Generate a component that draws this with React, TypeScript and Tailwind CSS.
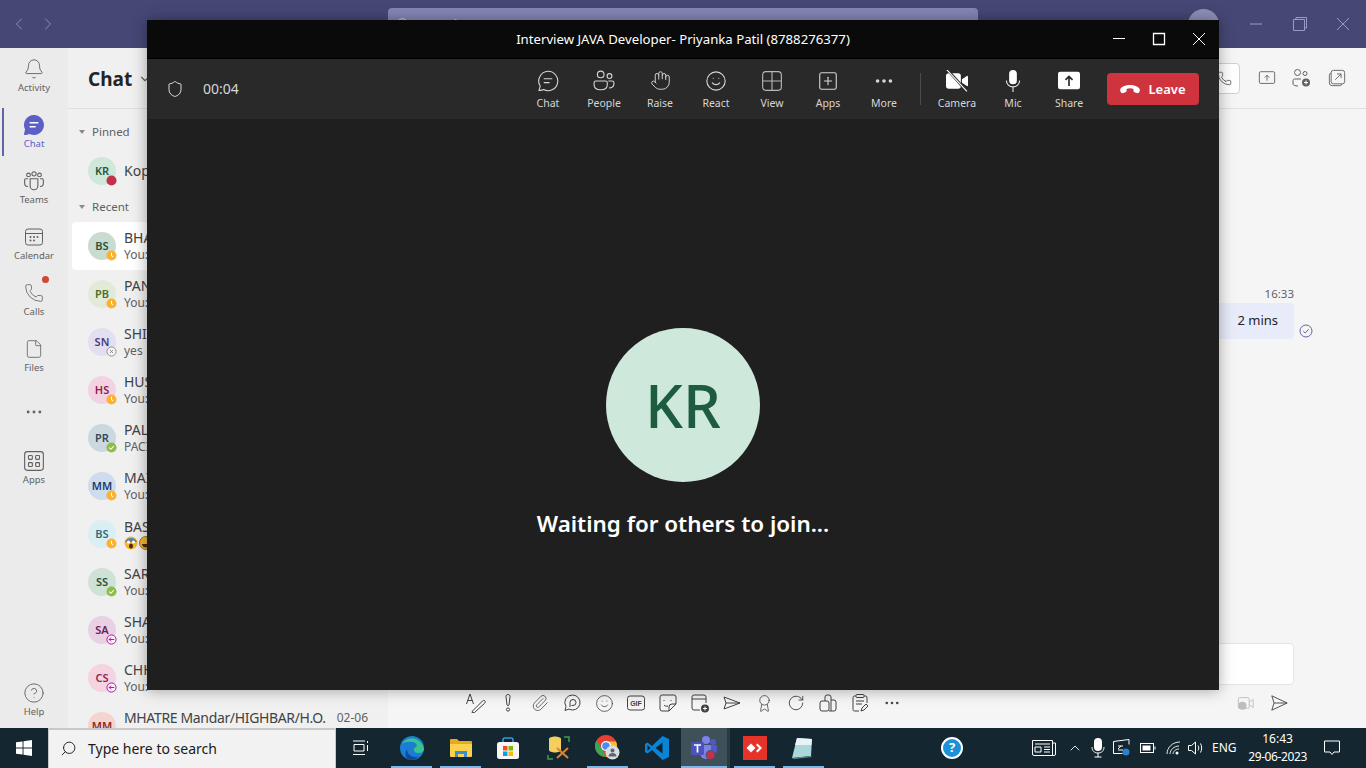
import type { ReactNode } from "react";
import {
  Bell,
  Phone,
  File,
  Ellipsis,
  CircleHelp,
  Search,
  Smile,
  Hand,
  SquarePlus,
  Paperclip,
  Award,
  RotateCw,
  ChevronLeft,
  ChevronRight,
  ChevronDown,
  Shield,
  ChevronUp,
} from "lucide-react";

const font = "font-['Noto_Sans','Open_Sans',sans-serif]";

function Svg({ size = 20, children, className = "" }: { size?: number; children: ReactNode; className?: string }) {
  return (
    <svg width={size} height={size} viewBox="0 0 20 20" fill="none" stroke="currentColor" strokeWidth={1} className={className}>
      {children}
    </svg>
  );
}

/* ---- rail icons ---- */
const ChatFilled = () => (
  <svg width="22" height="22" viewBox="0 0 20 20" className="text-[#5b5fc7]">
    <path d="M10 1a9 9 0 1 1-3.900 17.100c-1.400.4-3.300.9-4.600 1-.4 0-.7-.3-.6-.6.3-1.400.7-2.900 1-4.300A9 9 0 0 1 10 1Z" fill="currentColor" />
    <path d="M6.500 8h7M6.500 11.500h4.500" stroke="#fff" strokeWidth="1.400" strokeLinecap="round" />
  </svg>
);
const TeamsIcon = () => (
  <Svg size={22}>
    <circle cx="5" cy="4.500" r="1.700" />
    <circle cx="10" cy="3.500" r="1.900" />
    <circle cx="15" cy="4.500" r="1.700" />
    <path d="M6.500 8h7v6.500a3.500 3.500 0 0 1-7 0V8Z" />
    <path d="M4.500 8H2.500C1.800 8 1.500 8.400 1.500 9v3c0 1.700 1.200 3 3 3M15.500 8h2c.7 0 1 .4 1 1v3c0 1.700-1.200 3-3 3" />
  </Svg>
);
const CalendarIcon = () => (
  <Svg size={20}>
    <rect x="1.500" y="2" width="17" height="16" rx="2.500" />
    <path d="M1.500 6.500h17" />
    <g fill="currentColor" stroke="none">
      <circle cx="6.500" cy="10" r="1" />
      <circle cx="10" cy="10" r="1" />
      <circle cx="13.500" cy="10" r="1" />
      <circle cx="6.500" cy="13.500" r="1" />
      <circle cx="10" cy="13.500" r="1" />
    </g>
  </Svg>
);
const AppsIcon = () => (
  <Svg size={22}>
    <rect x="1.500" y="1.500" width="17" height="17" rx="2.500" />
    <rect x="5" y="5" width="3.500" height="3.500" rx=".7" />
    <rect x="11.500" y="5" width="3.500" height="3.500" rx=".7" />
    <rect x="5" y="11.500" width="3.500" height="3.500" rx=".7" />
    <rect x="11.500" y="11.500" width="3.500" height="3.500" rx=".7" />
  </Svg>
);

/* ---- meeting toolbar icons ---- */
const ChatOutline = () => (
  <svg width="22" height="22" viewBox="0 0 20 20" fill="none" stroke="currentColor" strokeWidth="1">
    <path d="M10 1.200a8.800 8.800 0 1 1-4 16.600c-1.300.4-2.900.9-4.200.9.300-1.400.8-2.800 1.100-4.100A8.800 8.800 0 0 1 10 1.200Z" />
    <path d="M6.500 8h7M6.500 11.500h4.500" strokeLinecap="round" />
  </svg>
);
const PeopleIcon = () => (
  <svg width="22" height="22" viewBox="0 0 20 20" fill="none" stroke="currentColor" strokeWidth="1">
    <circle cx="7" cy="4" r="3" />
    <circle cx="15" cy="5.500" r="2.200" />
    <path d="M1 11.500c0-.8.600-1.500 1.500-1.500h9c.8 0 1.500.7 1.500 1.500v2c0 3-2.500 4.500-6 4.500s-6-1.500-6-4.500v-2Z" />
    <path d="M14 10h3.500c.8 0 1.500.7 1.500 1.500v1c0 2.500-2 3.800-4.500 3.800" />
  </svg>
);
const ViewIcon = () => (
  <svg width="22" height="22" viewBox="0 0 20 20" fill="none" stroke="#b8b8b8" strokeWidth="1">
    <rect x="1.500" y="1.500" width="17" height="17" rx="3" />
    <path d="M10 1.500v17M1.500 10h17" />
  </svg>
);
const CameraOff = () => (
  <svg width="22" height="22" viewBox="0 0 20 20">
    <rect x="0" y="3" width="13.500" height="14" rx="2.500" fill="#fff" />
    <path d="M14.500 8.300 19 5.400c.4-.2 1 0 1 .6v8c0 .6-.6.800-1 .6l-4.500-2.900V8.300Z" fill="#fff" />
    <path d="M1 -.5 19 19.500" stroke="#292929" strokeWidth="2.400" />
    <path d="M.5 -.5 19 19.500" stroke="#fff" strokeWidth="1" />
  </svg>
);
const MicFilled = () => (
  <svg width="22" height="22" viewBox="0 0 20 20">
    <rect x="6.500" y="0" width="7" height="13" rx="3.500" fill="#fff" />
    <path d="M4 9.500c0 3.500 2.700 5.800 6 5.800s6-2.300 6-5.800M10 15.500V20" stroke="#e8e8e8" strokeWidth="1" fill="none" />
  </svg>
);
const ShareFilled = () => (
  <svg width="22" height="22" viewBox="0 0 20 20">
    <rect x="0" y="1.500" width="20" height="16" rx="2" fill="#fff" />
    <path d="M10 14.500V6M6.800 9 10 5.800 13.200 9" stroke="#292929" strokeWidth="1.500" fill="none" />
  </svg>
);
const HangUp = () => (
  <svg width="20" height="10" viewBox="0 0 20 10">
    <path d="M10 0C5.500 0 1.800 1.700.5 3.700-.2 4.800.2 6.500 1 7.500c.5.700 1.500.8 2.300.5l2.200-.8c.8-.3 1.200-1.100 1.100-2l-.1-1.300c1-.4 2.300-.6 3.500-.6s2.500.2 3.500.6l-.1 1.300c-.1.900.3 1.700 1.100 2l2.200.8c.8.3 1.800.2 2.300-.5.800-1 1.200-2.700.5-3.800C18.200 1.700 14.500 0 10 0Z" fill="#fff" />
  </svg>
);

function ToolBtn({ label, children, strong }: { label: string; children: ReactNode; strong?: boolean }) {
  return (
    <div className={`flex w-[56px] flex-col items-center ${strong ? "text-white" : "text-[#d6d6d6]"}`}>
      <div className="flex h-[24px] items-center justify-center">{children}</div>
      <span className="mt-[3px] text-[10.500px] leading-[14px] text-[#d6d6d6]">{label}</span>
    </div>
  );
}

/* ---- rail ---- */
function RailItem({ label, children, active, dot }: { label?: string; children: ReactNode; active?: boolean; dot?: boolean }) {
  return (
    <div className={`relative flex h-[56px] w-[68px] flex-col items-center ${label ? "pt-[10px]" : "justify-center"} ${active ? "text-[#5b5fc7]" : "text-[#616161]"}`}>
      {active && <div className="absolute left-[2px] top-[4px] h-[48px] w-[2px] bg-[#6264a7]" />}
      {dot && <div className="absolute right-[19px] top-[4px] h-[7px] w-[7px] rounded-full bg-[#cc4a31]" />}
      <div className="flex h-[22px] items-center justify-center">{children}</div>
      {label && <span className="mt-[1px] text-[9.500px] leading-[14px]">{label}</span>}
    </div>
  );
}

/* ---- status badge ---- */
type Status = "busy" | "away" | "off" | "ok" | "oof";

function Badge({ status }: { status: Status }) {
  return (
    <div className="absolute left-[17px] top-[17px] flex h-[12px] w-[12px] items-center justify-center rounded-full">
      <svg width="11" height="11" viewBox="0 0 12 12">
        {status === "busy" && <circle cx="6" cy="6" r="5.500" fill="#c4314b" />}
        {status === "away" && (
          <>
            <circle cx="6" cy="6" r="5.500" fill="#fdb22c" />
            <path d="M6 3v3.200l2 1.300" stroke="#fff" strokeWidth="1.100" fill="none" />
          </>
        )}
        {status === "ok" && (
          <>
            <circle cx="6" cy="6" r="5.500" fill="#8cbd4a" />
            <path d="M3.500 6.200 5.300 8l3.200-3.500" stroke="#fff" strokeWidth="1.100" fill="none" />
          </>
        )}
        {status === "off" && (
          <>
            <circle cx="6" cy="6" r="5" fill="#f5f5f5" stroke="#8a8a8a" />
            <path d="M4.200 4.200l3.600 3.600M7.800 4.200 4.200 7.800" stroke="#8a8a8a" />
          </>
        )}
        {status === "oof" && (
          <>
            <circle cx="6" cy="6" r="5" fill="#f5f5f5" stroke="#b4009e" />
            <path d="M9 6H3.500M5.500 4 3.500 6l2 2" stroke="#b4009e" fill="none" />
          </>
        )}
      </svg>
    </div>
  );
}

const Emoji = () => (
  <div className="flex gap-[1px]">
    <svg width="14" height="14" viewBox="0 0 14 14">
      <circle cx="7" cy="7" r="6.500" fill="#f2b632" />
      <path d="M1 6a6.500 6.500 0 0 1 12 0Z" fill="#5b7fb0" />
      <circle cx="4.500" cy="6" r="1.500" fill="#fff" />
      <circle cx="9.500" cy="6" r="1.500" fill="#fff" />
      <ellipse cx="7" cy="10" rx="2" ry="2.500" fill="#4a2a10" />
    </svg>
    <svg width="14" height="14" viewBox="0 0 14 14">
      <circle cx="7" cy="7" r="6.500" fill="#f2b632" />
      <circle cx="7" cy="7" r="6.500" fill="none" stroke="#6b4a10" strokeWidth=".7" />
      <path d="M3 8h8c0 2.500-2 3.500-4 3.500S3 10.500 3 8Z" fill="#4a2a10" />
    </svg>
  </div>
);

const rows: { initials: string; bg: string; fg: string; status: Status; name: string; sub: ReactNode; active?: boolean }[] = [
  { initials: "BS", bg: "bg-[#c9dcd0]", fg: "text-[#28503a]", status: "away", name: "BHA", sub: "You:", active: true },
  { initials: "PB", bg: "bg-[#e2ebd8]", fg: "text-[#4f6b2a]", status: "away", name: "PAN", sub: "You:" },
  { initials: "SN", bg: "bg-[#e3dff0]", fg: "text-[#4b3d7a]", status: "off", name: "SHI", sub: "yes" },
  { initials: "HS", bg: "bg-[#f3d3e1]", fg: "text-[#8e1f4f]", status: "away", name: "HUS", sub: "You:" },
  { initials: "PR", bg: "bg-[#ccd8e0]", fg: "text-[#2f4a5a]", status: "ok", name: "PAL", sub: "PACI" },
  { initials: "MM", bg: "bg-[#cddcee]", fg: "text-[#1f3a6b]", status: "away", name: "MAI", sub: "You:" },
  { initials: "BS", bg: "bg-[#d9eff3]", fg: "text-[#2c6f7f]", status: "away", name: "BAS", sub: <Emoji /> },
  { initials: "SS", bg: "bg-[#cfe2d6]", fg: "text-[#28503a]", status: "ok", name: "SAR", sub: "You:" },
  { initials: "SA", bg: "bg-[#e9d0e4]", fg: "text-[#6b2458]", status: "oof", name: "SHA", sub: "You:" },
  { initials: "CS", bg: "bg-[#f6d3e0]", fg: "text-[#8b2a52]", status: "oof", name: "CHH", sub: "You:" },
];

function Avatar({ initials, bg, fg, status }: { initials: string; bg: string; fg: string; status?: Status }) {
  return (
    <div className={`relative flex h-[28px] w-[28px] shrink-0 items-center justify-center rounded-full text-[11px] font-semibold ${bg} ${fg}`}>
      {initials}
      {status && <Badge status={status} />}
    </div>
  );
}

function SectionHead({ label, className }: { label: string; className: string }) {
  return (
    <div className={`flex h-[20px] items-center pl-[11px] text-[11.500px] text-[#616161] ${className}`}>
      <div className="mr-[7px] h-0 w-0 border-x-[3.500px] border-t-[4px] border-x-transparent border-t-[#8a8a8a]" />
      {label}
    </div>
  );
}

/* ---- compose toolbar ---- */
const composeIcons: ReactNode[] = [
  <svg key="a" width="20" height="20" viewBox="0 0 20 20" fill="none" stroke="currentColor">
    <path d="M.5 11 4 1l3.500 10M1.800 7.500h4.400M6.500 18l10-10c.8-.8 2-.8 2.500 0s.3 1.600-.4 2.300L8.500 19.500l-2.500.2.500-1.700Z" />
  </svg>,
  <svg key="b" width="20" height="20" viewBox="0 0 20 20" fill="none" stroke="currentColor">
    <path d="M10 1.500c1.300 0 2.200.9 2 2.200L11 12c-.1.800-1.900.8-2 0L8 3.700C7.800 2.400 8.700 1.500 10 1.500Z" />
    <circle cx="10" cy="16.500" r="1.600" />
  </svg>,
  <Paperclip key="c" size={18} strokeWidth={1} />,
  <svg key="d" width="20" height="20" viewBox="0 0 20 20" fill="none" stroke="currentColor">
    <path d="M10.500 2a7.500 7.500 0 1 1-3.500 14.100L3 17.500l1-4A7.500 7.500 0 0 1 10.500 2Z" />
    <path d="M8 14V9.500a3 3 0 1 1 3 3H9.500" />
  </svg>,
  <Smile key="e" size={19} strokeWidth={1} />,
  <svg key="f" width="20" height="20" viewBox="0 0 20 20" fill="none" stroke="currentColor">
    <rect x="1.500" y="3" width="17" height="14" rx="2.500" />
    <text x="10" y="12.800" fontSize="7" fontWeight="700" fill="currentColor" stroke="none" textAnchor="middle" fontFamily="Liberation Sans, sans-serif">
      GIF
    </text>
  </svg>,
  <svg key="g" width="20" height="20" viewBox="0 0 20 20" fill="none" stroke="currentColor">
    <path d="M4 2h12a2 2 0 0 1 2 2v7l-7 7H4a2 2 0 0 1-2-2V4a2 2 0 0 1 2-2Z" />
    <path d="M11 18v-4a3 3 0 0 1 3-3h4M6 7v1M13 7v1M6 12c1 1.200 2.500 1.500 4 1" />
  </svg>,
  <svg key="h" width="20" height="20" viewBox="0 0 20 20" fill="none" stroke="currentColor">
    <path d="M10 17H4a2 2 0 0 1-2-2V4a2 2 0 0 1 2-2h10a2 2 0 0 1 2 2v6M2 6h14" />
    <circle cx="15" cy="15.500" r="4" fill="#424242" stroke="none" />
    <path d="M15 13.500v4M13 15.500h4" stroke="#fff" />
  </svg>,
  <svg key="i" width="20" height="20" viewBox="0 0 20 20" fill="none" stroke="currentColor">
    <path d="M2 4l16 6-16 6 2-6-2-6ZM4 10h14" />
  </svg>,
  <Award key="j" size={19} strokeWidth={1} />,
  <RotateCw key="k" size={18} strokeWidth={1.200} />,
  <svg key="l" width="20" height="20" viewBox="0 0 20 20" fill="none" stroke="currentColor">
    <rect x="2" y="8" width="9" height="10" rx="2" />
    <path d="M7 8V4a2 2 0 0 1 2-2h2a2 2 0 0 1 2 2v14M11 18h5a2 2 0 0 0 2-2V9a2 2 0 0 0-2-2h-3" />
  </svg>,
  <svg key="m" width="20" height="20" viewBox="0 0 20 20" fill="none" stroke="currentColor">
    <path d="M6 3H4.500A1.500 1.500 0 0 0 3 4.500v12A1.500 1.500 0 0 0 4.500 18H9M14 3h1.500A1.500 1.500 0 0 1 17 4.500V10" />
    <rect x="6" y="1.500" width="8" height="3" rx="1" />
    <path d="M6 8h8M6 11h6M11 18l1-3 4-4 2 2-4 4-3 1Z" />
  </svg>,
  <Ellipsis key="n" size={18} strokeWidth={1.500} />,
];

/* ---- taskbar icons ---- */
const WinLogo = () => (
  <svg width="16" height="16" viewBox="0 0 16 16" fill="#fff">
    <path d="M0 2.300 6.600 1.400v6.200H0V2.300ZM7.500 1.300 16 0v7.600H7.500V1.300ZM0 8.400h6.600v6.200L0 13.700V8.400ZM7.500 8.400H16V16l-8.500-1.200V8.400Z" />
  </svg>
);
const Edge = () => (
  <svg width="24" height="24" viewBox="0 0 24 24">
    <circle cx="12" cy="12" r="12" fill="#1a7fd4" />
    <path d="M2 8c3-5 9-7 14-5 4 2 7 5 8 10 0 3-3 4-6 4-2 0-4-1-4-3 0-3 3-3 3-5-1-3-6-4-10-3-2 0-4 1-5 2Z" fill="#39c48f" />
    <path d="M7 13c0 4 3 8 8 8 2 0 3-.5 4-1.500-2 3-5 4.500-8 4.500-2 0-4-1-5-3-1-3-.5-6 1-8Z" fill="#0c4a9c" />
  </svg>
);
const Explorer = () => (
  <svg width="22" height="20" viewBox="0 0 22 20">
    <path d="M0 2a1 1 0 0 1 1-1h6l2 2h12a1 1 0 0 1 1 1v3H0V2Z" fill="#e8a820" />
    <path d="M0 6h22v12a1 1 0 0 1-1 1H1a1 1 0 0 1-1-1V6Z" fill="#fbd24c" />
    <path d="M5 13h12v6H5Z" fill="#3a8fd0" />
    <path d="M8 16h6v3H8Z" fill="#fbd24c" />
  </svg>
);
const Store = () => (
  <svg width="24" height="24" viewBox="0 0 24 24" className="-ml-[3px]">
    <path d="M7 6V4a2 2 0 0 1 2-2h6a2 2 0 0 1 2 2v2" fill="none" stroke="#2a9fd8" strokeWidth="1.600" />
    <rect x="1" y="6" width="22" height="17" rx="2.500" fill="#f7f7f7" />
    <rect x="7" y="10" width="4.500" height="4.500" fill="#f25022" />
    <rect x="12.500" y="10" width="4.500" height="4.500" fill="#7fba00" />
    <rect x="7" y="15.500" width="4.500" height="4.500" fill="#00a4ef" />
    <rect x="12.500" y="15.500" width="4.500" height="4.500" fill="#ffb900" />
  </svg>
);
const ToolIcon = () => (
  <svg width="24" height="24" viewBox="0 0 24 24" fill="none">
    <path d="M2 3c0-1.500 3-2.500 6-2.500s6 1 6 2.500v11c0 1.500-3 2.500-6 2.500s-6-1-6-2.500V3Z" fill="#f3cf5f" />
    <path d="M17 1h5v5M1 19v4h5" stroke="#3f9a4f" strokeWidth="1.500" />
    <path d="M10 12l11 10M21 12 10 22" stroke="#e0822f" strokeWidth="2" />
  </svg>
);
const Chrome = () => (
  <svg width="26" height="26" viewBox="0 0 26 26">
    <circle cx="11" cy="11" r="11" fill="#e34133" />
    <path d="M11 22A11 11 0 0 1 1.500 5.500L7 14l4 8Z" fill="#3aa757" />
    <path d="M11 22A11 11 0 0 0 21 6.500H11l4 7-4 8.500Z" fill="#fbc02d" />
    <circle cx="11" cy="11" r="5" fill="#fff" />
    <circle cx="11" cy="11" r="3.800" fill="#4a8bf5" />
    <circle cx="17.500" cy="17.500" r="7" fill="#d8dde2" />
    <circle cx="17.500" cy="15.500" r="2" fill="#5a6570" />
    <path d="M13.500 21.500c0-2.500 2-3.500 4-3.500s4 1 4 3.500Z" fill="#5a6570" />
  </svg>
);
const VsCode = () => (
  <svg width="24" height="24" viewBox="0 0 24 24">
    <path d="M17.500 0 24 3v18l-6.500 3L7 14l-4.500 3.500L0 16V8l2.500-1.500L7 10 17.500 0Z" fill="#0a84d6" />
    <path d="M17.500 6.500 10.500 12l7 5.500v-11ZM2.500 9v6L5.500 12l-3-3Z" fill="#0f2530" />
  </svg>
);
const TeamsApp = () => (
  <svg width="26" height="26" viewBox="0 0 26 26">
    <circle cx="15" cy="5" r="4" fill="#7b83eb" />
    <circle cx="22" cy="7" r="3" fill="#5059c9" />
    <path d="M9 10h12v8a6 6 0 0 1-12 0v-8Z" fill="#7b83eb" />
    <path d="M20 10h6v6a4 4 0 0 1-6 2.500V10Z" fill="#5059c9" />
    <rect x="0" y="7" width="13" height="13" rx="1.500" fill="#4b53bc" />
    <path d="M3 10h7M6.500 10v7.500" stroke="#fff" strokeWidth="1.700" />
    <circle cx="19.500" cy="20" r="4.500" fill="#c4314b" stroke="#3e5560" strokeWidth="1" />
  </svg>
);
const AnyDesk = () => (
  <svg width="24" height="24" viewBox="0 0 24 24">
    <rect width="24" height="24" fill="#e5332a" />
    <path d="M8 7.500 12.500 12 8 16.500 3.500 12 8 7.500Z" fill="#fff" />
    <path d="M14.500 7.500 19 12l-4.500 4.500-1.500-1.500 3-3-3-3 1.500-1.500Z" fill="#fff" />
  </svg>
);
const Notes = () => (
  <svg width="24" height="24" viewBox="0 0 24 24" className="-ml-[3px]">
    <path d="M7 2 22 3l-1 17L2 22 7 2Z" fill="#a8d8dc" />
    <path d="M7 2 22 3l-.5 6L5 9 7 2Z" fill="#e8f4f4" />
    <path d="M2 22 21 20l1 1-18 2-2-1Z" fill="#5e8e92" />
  </svg>
);

function TaskApp({ children, running, active }: { children: ReactNode; running?: boolean; active?: boolean }) {
  return (
    <div className={`relative flex h-[40px] w-[49px] items-center justify-center ${active ? "border-r-[3px] border-[#2a3b44] bg-[#3e5058]" : ""}`}>
      {children}
      {running && <div className={`absolute bottom-0 h-[2px] bg-[#76b9ed] ${active ? "inset-x-0" : "inset-x-[4px]"}`} />}
    </div>
  );
}

export default function App() {
  return (
    <div className={`relative flex h-[768px] w-[1366px] flex-col overflow-hidden bg-[#f5f5f5] ${font}`}>
      {/* Teams title bar */}
      <div className="relative flex h-[48px] shrink-0 items-center bg-[#464775] text-[#9a9bc4]">
        <div className="flex w-[388px] items-center pl-[9px]">
          <ChevronLeft size={20} strokeWidth={1} />
          <ChevronRight size={20} strokeWidth={1} className="ml-[9px]" />
        </div>
        <div className="mt-[8px] flex h-[32px] w-[590px] items-center self-start rounded-[4px] bg-[#8586b5] pl-[8px] text-[14px] text-[#d8d8ea]">
          <Search size={14} />
          <span className="ml-[8px]">Search</span>
        </div>
        <div className="ml-[210px] h-[31px] w-[31px] rounded-full bg-[#8f90b8]" />
        <svg width="14" height="14" viewBox="0 0 14 14" className="ml-[30px]" fill="none" stroke="currentColor">
          <path d="M1 7h12" />
        </svg>
        <svg width="16" height="16" viewBox="0 0 16 16" className="ml-[29px]" fill="none" stroke="currentColor">
          <path d="M1.500 3.500h11v11h-11zM4 3.500V1.500h10.500v10.500h-2" />
        </svg>
        <svg width="14" height="14" viewBox="0 0 14 14" className="ml-[28px]" fill="none" stroke="currentColor">
          <path d="M1 1l12 12M13 1 1 13" />
        </svg>
      </div>

      {/* Teams body */}
      <div className="flex min-h-0 flex-1">
        {/* App rail */}
        <div className="flex w-[68px] shrink-0 flex-col bg-[#ebebeb]">
          <RailItem label="Activity">
            <Bell size={22} strokeWidth={1} />
          </RailItem>
          <RailItem label="Chat" active>
            <ChatFilled />
          </RailItem>
          <RailItem label="Teams">
            <TeamsIcon />
          </RailItem>
          <RailItem label="Calendar">
            <CalendarIcon />
          </RailItem>
          <RailItem label="Calls" dot>
            <Phone size={20} strokeWidth={1} />
          </RailItem>
          <RailItem label="Files">
            <File size={20} strokeWidth={1} />
          </RailItem>
          <RailItem>
            <Ellipsis size={20} strokeWidth={1.500} />
          </RailItem>
          <RailItem label="Apps">
            <AppsIcon />
          </RailItem>
          <div className="mt-auto">
            <RailItem label="Help">
              <CircleHelp size={22} strokeWidth={1} />
            </RailItem>
          </div>
        </div>

        {/* Chat list */}
        <div className="w-[320px] shrink-0 overflow-hidden bg-[#f0f0f0]">
          <div className="flex h-[61px] items-center border-b border-[#e0e0e0] pl-[20px] pt-[2px]">
            <span className="text-[19px] font-bold leading-none text-[#242424]">Chat</span>
            <ChevronDown size={14} className="ml-[6px] text-[#616161]" />
          </div>
          <SectionHead label="Pinned" className="mt-[13px]" />
          <div className="mt-[5px] flex h-[48px] items-center pl-[20px]">
            <Avatar initials="KR" bg="bg-[#cfe8da]" fg="text-[#1f5c3f]" status="busy" />
            <span className="mb-[2px] ml-[8px] text-[14px] text-[#424242]">Kop</span>
          </div>
          <SectionHead label="Recent" className="mt-[2px]" />
          <div className="mt-[5px]">
            {rows.map((r, i) => (
              <div key={i} className={`ml-[4px] flex h-[48px] items-center rounded-[4px] pl-[16px] ${r.active ? "bg-white" : ""}`}>
                <Avatar initials={r.initials} bg={r.bg} fg={r.fg} status={r.status} />
                <div className="ml-[8px]">
                  <div className="text-[14px] leading-[17px] text-[#424242]">{r.name}</div>
                  <div className="mt-[1px] text-[12px] leading-[16px] text-[#616161]">{r.sub}</div>
                </div>
              </div>
            ))}
            <div className="ml-[4px] flex h-[48px] items-start pl-[16px] pt-[10px]">
              <Avatar initials="MM" bg="bg-[#f5d3d0]" fg="text-[#8a2a22]" />
              <div className="-mt-[3px] ml-[8px] flex w-[244px] items-center text-[#616161]">
                <span className="text-[14px] leading-[17px] tracking-[-0.35px] text-[#424242]">MHATRE Mandar/HIGHBAR/H.O.</span>
                <span className="ml-auto text-[12px] leading-[17px]">02-06</span>
              </div>
            </div>
          </div>
        </div>

        {/* Conversation */}
        <div className="flex min-w-0 flex-1 flex-col bg-[#f5f5f5]">
          <div className="flex h-[61px] shrink-0 items-center justify-end border-b border-[#e0e0e0] pr-[20px] text-[#616161]">
            <div className="flex h-[31px] w-[60px] items-center justify-end rounded-[4px] border border-[#d1d1d1] bg-white pr-[7px]">
              <Phone size={15} strokeWidth={1.200} className="text-[#424242]" />
            </div>
            <svg width="18" height="18" viewBox="0 0 20 20" className="ml-[18px]" fill="none" stroke="currentColor">
              <rect x="1.500" y="3" width="17" height="13" rx="1.500" />
              <path d="M10 13V7M7.500 9.500 10 7l2.500 2.500" />
            </svg>
            <svg width="20" height="20" viewBox="0 0 20 20" className="ml-[15px]" fill="none" stroke="currentColor">
              <circle cx="6.500" cy="4.500" r="3" />
              <circle cx="14" cy="5.500" r="2" />
              <path d="M2 16v-3.500c0-.8.600-1.500 1.500-1.500H10M2 16c0 1 2 2 5 2" />
              <circle cx="15" cy="14.500" r="4" fill="#616161" stroke="none" />
              <path d="M15 12.500v4M13 14.500h4" stroke="#fff" />
            </svg>
            <svg width="18" height="18" viewBox="0 0 20 20" className="ml-[17px]" fill="none" stroke="currentColor">
              <rect x="3.500" y="1.500" width="15" height="15" rx="2.500" />
              <path d="M3.500 4.500A2.500 2.500 0 0 0 1.500 7v8.500a3 3 0 0 0 3 3H13a2.500 2.500 0 0 0 2.500-2M8 12l6.500-6.500M10 5.500h4.500V10" />
            </svg>
          </div>

          <div className="flex flex-col items-end pr-[72px] pt-[177px]">
            <div className="text-[11.500px] leading-[16px] text-[#616161]">16:33</div>
            <div className="relative mt-[1px] flex h-[36px] w-[110px] items-center justify-end rounded-[4px] bg-[#e8ebfa] pr-[16px] text-[13px] text-[#242424]">
              2 mins
              <svg width="14" height="14" viewBox="0 0 14 14" className="absolute -right-[19px] top-[21px] text-[#6264a7]" fill="none" stroke="currentColor">
                <circle cx="7" cy="7" r="6" />
                <path d="M4.300 7.200 6.200 9l3.500-3.800" />
              </svg>
            </div>
          </div>

          <div className="mt-auto">
            <div className="ml-[20px] mr-[72px] h-[42px] rounded-[4px] border border-[#e5e5e5] bg-white" />
            <div className="mb-[9px] mt-[2px] flex h-[32px] items-center pl-[72px] pr-[78px] text-[#424242]">
              {composeIcons.map((icon, i) => (
                <div key={i} className="flex w-[32px] items-center justify-center">
                  {icon}
                </div>
              ))}
              <svg width="18" height="18" viewBox="0 0 20 20" className="ml-auto text-[#bdbdbd]" fill="none" stroke="currentColor">
                <rect x="1.500" y="4" width="12" height="12" rx="1.500" />
                <path d="M14 9l4-3v9l-4-3" />
                <circle cx="6" cy="13" r="4.500" fill="#bdbdbd" stroke="none" />
              </svg>
              <svg width="18" height="18" viewBox="0 0 20 20" className="ml-[15px] text-[#424242]" fill="none" stroke="currentColor">
                <path d="M2 2l17 8-17 8 2.500-8L2 2ZM4.500 10H19" />
              </svg>
            </div>
          </div>
        </div>
      </div>

      {/* Windows taskbar */}
      <div className={`flex h-[40px] shrink-0 items-center bg-[#14262f] text-white ${font}`}>
        <div className="flex w-[48px] items-center justify-center">
          <WinLogo />
        </div>
        <div className="flex h-[40px] w-[288px] items-center border-x border-t-2 border-[#c8c8c8] bg-[#f2f2f2] pb-[2px] pl-[11px] text-[#1a1a1a]">
          <Search size={17} strokeWidth={1.300} className="-scale-x-100" />
          <span className="ml-[11px] text-[14px]">Type here to search</span>
        </div>
        <div className="flex w-[49px] items-center justify-center">
          <svg width="16" height="16" viewBox="0 0 16 16" fill="none" stroke="#fff">
            <path d="M0 1h12M0 14.500h12M1 4.500h10v6.500H1zM14.500 1v2M14.500 5v6" />
          </svg>
        </div>
        <div className="flex pl-[2px]">
          <TaskApp running>
            <Edge />
          </TaskApp>
          <TaskApp running>
            <Explorer />
          </TaskApp>
          <TaskApp>
            <Store />
          </TaskApp>
          <TaskApp>
            <ToolIcon />
          </TaskApp>
          <TaskApp running>
            <Chrome />
          </TaskApp>
          <TaskApp>
            <VsCode />
          </TaskApp>
          <TaskApp running active>
            <TeamsApp />
          </TaskApp>
          <TaskApp running>
            <AnyDesk />
          </TaskApp>
          <TaskApp running>
            <Notes />
          </TaskApp>
        </div>

        {/* tray */}
        <div className="ml-[113px] flex h-[22px] w-[22px] items-center justify-center rounded-full border-2 border-white bg-[#1b92d8] text-[13px] font-bold text-white">
          ?
        </div>
        <svg width="24" height="16" viewBox="0 0 24 16" className="ml-[69px]" fill="none" stroke="#fff">
          <path d="M.5.500h20v15H2a1.500 1.500 0 0 1-1.500-1.500V.5ZM20.500 3h3v11a1.500 1.500 0 0 1-1.500 1.500h-1.500" />
          <path d="M3 4h15M3 7h6v5H3zM12 7h6M12 9.500h6M12 12h6" />
        </svg>
        <ChevronUp size={16} strokeWidth={1.300} className="ml-[11px]" />
        <svg width="14" height="20" viewBox="0 0 14 20" className="ml-[8px]" fill="none">
          <rect x="3" y="0" width="8" height="13" rx="4" fill="#fff" />
          <path d="M1 9c0 4 2.500 6 6 6s6-2 6-6M7 15v4M3.500 19h7" stroke="#fff" />
        </svg>
        <svg width="18" height="18" viewBox="0 0 18 18" className="ml-[8px]" fill="none" stroke="#fff">
          <path d="M.5 2.500 16 .5v5M.5 2.500v12h9" />
          <path d="M5 7h5M5 10l3-3M10 11H5" />
          <circle cx="13" cy="13" r="3.500" fill="#2f7fd1" stroke="none" />
        </svg>
        <svg width="16" height="10" viewBox="0 0 16 10" className="ml-[9px]" fill="none" stroke="#fff">
          <rect x=".5" y=".5" width="13" height="9" />
          <rect x="2.500" y="2.500" width="8" height="5" fill="#fff" stroke="none" />
          <path d="M15 3.500v3" />
        </svg>
        <svg width="16" height="14" viewBox="0 0 16 14" className="ml-[10px]" fill="none" stroke="#fff" strokeWidth=".9">
          <path d="M1 13C1 7 6 1 14 1M4 13c0-4 4-8 9-8M7 13c0-2 2-5 6-5" />
          <circle cx="11" cy="12" r="1.500" fill="#fff" stroke="none" />
        </svg>
        <svg width="16" height="14" viewBox="0 0 16 14" className="ml-[6px]" fill="none" stroke="#fff">
          <path d="M.5 4.500h3L7.500 1v12l-4-3.500h-3zM10 4.500c1 1.500 1 3.500 0 5M12.500 2.500c1.500 2.500 1.500 6.500 0 9" />
        </svg>
        <span className="ml-[8px] text-[12px]">ENG</span>
        <div className="ml-[11px] w-[60px] text-center text-[12px] leading-[18px]">
          <div>16:43</div>
          <div className="whitespace-nowrap tracking-[-0.4px]">29-06-2023</div>
        </div>
        <svg width="16" height="16" viewBox="0 0 16 16" className="ml-[16px]" fill="none" stroke="#fff">
          <path d="M.5 1h15v11H10l-2 2.500L6 12H.5z" />
        </svg>
      </div>

      {/* Meeting window floats over the main window */}
      <div className={`absolute left-[147px] top-[20px] flex h-[670px] w-[1072px] flex-col bg-[#1f1f1f] shadow-[0_0_14px_rgba(0,0,0,0.35)] ${font}`}>
        <div className="relative flex h-[39px] shrink-0 items-center justify-center border-b border-[#000] bg-[#0a0a0a] pt-[1px] text-[13.200px] text-white">
          Interview JAVA Developer- Priyanka Patil (8788276377)
          <div className="absolute right-0 top-0 flex h-[38px] items-center">
            <div className="flex w-[40px] justify-center">
              <svg width="14" height="14" viewBox="0 0 14 14" fill="none" stroke="#fff">
                <path d="M1 6.500h12" />
              </svg>
            </div>
            <div className="flex w-[40px] justify-center">
              <svg width="14" height="14" viewBox="0 0 14 14" fill="none" stroke="#fff" strokeWidth="1.300">
                <path d="M1.500 1.500h11v11h-11z" />
              </svg>
            </div>
            <div className="flex w-[40px] justify-center">
              <svg width="14" height="14" viewBox="0 0 14 14" fill="none" stroke="#fff">
                <path d="M1 1l12 12M13 1 1 13" />
              </svg>
            </div>
          </div>
        </div>

        <div className="flex h-[60px] shrink-0 items-center bg-[#292929] pr-[20px]">
          <Shield size={18} strokeWidth={1.100} className="ml-[19px] text-white" />
          <span className="mb-[2px] ml-[19px] text-[14px] text-[#d6d6d6]">00:04</span>
          <div className="ml-auto flex items-center">
            <ToolBtn label="Chat"><ChatOutline /></ToolBtn>
            <ToolBtn label="People"><PeopleIcon /></ToolBtn>
            <ToolBtn label="Raise"><Hand size={21} strokeWidth={1.100} /></ToolBtn>
            <ToolBtn label="React"><Smile size={22} strokeWidth={1.200} /></ToolBtn>
            <ToolBtn label="View"><ViewIcon /></ToolBtn>
            <ToolBtn label="Apps"><SquarePlus size={22} strokeWidth={1.200} /></ToolBtn>
            <ToolBtn label="More"><Ellipsis size={22} strokeWidth={2} /></ToolBtn>
            <div className="ml-[8px] mr-[8px] h-[32px] w-px bg-[#4a4a4a]" />
            <ToolBtn label="Camera" strong><CameraOff /></ToolBtn>
            <ToolBtn label="Mic" strong><MicFilled /></ToolBtn>
            <ToolBtn label="Share" strong><ShareFilled /></ToolBtn>
            <div className="ml-[10px] flex h-[32px] w-[92px] items-center justify-center gap-[8px] rounded-[4px] bg-[#cf343e] pt-[1px] text-[13px] font-semibold text-white">
              <HangUp />
              Leave
            </div>
          </div>
        </div>

        <div className="flex flex-1 flex-col items-center pt-[209px]">
          <div className="flex h-[154px] w-[154px] items-center justify-center rounded-full bg-[#cfe8dc] text-[60px] font-medium leading-none text-[#1d5c3f]">
            KR
          </div>
          <div className="mt-[26px] text-[22.400px] font-semibold leading-[32px] text-white">Waiting for others to join...</div>
        </div>
      </div>
    </div>
  );
}
